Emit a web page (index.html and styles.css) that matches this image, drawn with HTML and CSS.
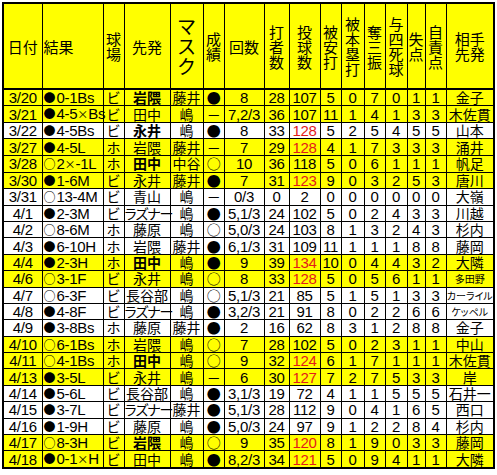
FILE: index.html
```html
<!DOCTYPE html>
<html lang="ja">
<head>
<meta charset="utf-8">
<title>先発成績</title>
<link rel="stylesheet" href="styles.css">
</head>
<body>
<table class="score">
<colgroup>
<col class="w39"><col class="w61"><col class="w21"><col class="w46"><col class="w33"><col class="w21"><col class="w40"><col class="w25"><col class="w31"><col class="w21"><col class="w23"><col class="w21"><col class="w22"><col class="w18"><col class="w21"><col class="w48">
</colgroup>
<thead>
<tr>
<th>日付</th><th class="l">結果</th><th>球<br>場</th><th>先発</th><th class="mask">マ<br>ス<br>ク</th><th>成<br>績</th><th>回数</th><th>打<br>者<br>数</th><th>投<br>球<br>数</th><th>被<br>安<br>打</th><th>被<br>本<br>塁<br>打</th><th>奪<br>三<br>振</th><th>与<br>四<br>死<br>球</th><th>失<br>点</th><th>自<br>責<br>点</th><th>相手<br>先発</th>
</tr>
</thead>
<tbody>
<tr class="y"><td>3/20</td><td class="l"><span class="mk">●</span>0-1Bs</td><td class="j">ビ</td><td class="j b">岩隈</td><td class="j">藤井</td><td class="mk">●</td><td>8</td><td>28</td><td>107</td><td>5</td><td>0</td><td>7</td><td>0</td><td>1</td><td>1</td><td class="j">金子</td></tr>
<tr class="y"><td>3/21</td><td class="l"><span class="mk">●</span>4-5<span class="mk x">×</span>Bs</td><td class="j">ビ</td><td class="j">田中</td><td class="j">嶋</td><td class="mk">－</td><td>7,2/3</td><td>36</td><td>107</td><td>11</td><td>1</td><td>4</td><td>1</td><td>3</td><td>3</td><td class="j">木佐貫</td></tr>
<tr><td>3/22</td><td class="l"><span class="mk">●</span>4-5Bs</td><td class="j">ビ</td><td class="j b">永井</td><td class="j">嶋</td><td class="mk">●</td><td>8</td><td>33</td><td class="r">128</td><td>5</td><td>2</td><td>5</td><td>4</td><td>5</td><td>5</td><td class="j">山本</td></tr>
<tr class="y"><td>3/27</td><td class="l"><span class="mk">●</span>4-5L</td><td class="j">ホ</td><td class="j">岩隈</td><td class="j">藤井</td><td class="mk">－</td><td>7</td><td>29</td><td class="r">128</td><td>4</td><td>1</td><td>7</td><td>3</td><td>3</td><td>3</td><td class="j">涌井</td></tr>
<tr class="y"><td>3/28</td><td class="l"><span class="mk">○</span>2<span class="mk x">×</span>-1L</td><td class="j">ホ</td><td class="j b">田中</td><td class="j">中谷</td><td class="mk">○</td><td>10</td><td>36</td><td>118</td><td>5</td><td>0</td><td>6</td><td>1</td><td>1</td><td>1</td><td class="j">帆足</td></tr>
<tr class="y"><td>3/30</td><td class="l"><span class="mk">●</span>1-6M</td><td class="j">ビ</td><td class="j">永井</td><td class="j">藤井</td><td class="mk">●</td><td>7</td><td>31</td><td class="r">123</td><td>9</td><td>0</td><td>3</td><td>2</td><td>5</td><td>3</td><td class="j">唐川</td></tr>
<tr><td>3/31</td><td class="l"><span class="mk">○</span>13-4M</td><td class="j">ビ</td><td class="j">青山</td><td class="j">嶋</td><td class="mk">－</td><td>0/3</td><td>0</td><td>2</td><td>0</td><td>0</td><td>0</td><td>0</td><td>0</td><td>0</td><td class="j">大嶺</td></tr>
<tr><td>4/1</td><td class="l"><span class="mk">●</span>2-3M</td><td class="j">ビ</td><td class="j kana">ラズナー</td><td class="j">嶋</td><td class="mk">●</td><td>5,1/3</td><td>24</td><td>102</td><td>5</td><td>0</td><td>2</td><td>4</td><td>3</td><td>3</td><td class="j">川越</td></tr>
<tr><td>4/2</td><td class="l"><span class="mk">○</span>8-6M</td><td class="j">ホ</td><td class="j">藤原</td><td class="j">嶋</td><td class="mk">○</td><td>5,0/3</td><td>24</td><td>103</td><td>8</td><td>1</td><td>3</td><td>2</td><td>4</td><td>3</td><td class="j">杉内</td></tr>
<tr><td>4/3</td><td class="l"><span class="mk">●</span>6-10H</td><td class="j">ホ</td><td class="j">岩隈</td><td class="j">藤井</td><td class="mk">●</td><td>6,1/3</td><td>31</td><td>109</td><td>11</td><td>1</td><td>1</td><td>1</td><td>8</td><td>8</td><td class="j">藤岡</td></tr>
<tr class="y"><td>4/4</td><td class="l"><span class="mk">●</span>2-3H</td><td class="j">ホ</td><td class="j b">田中</td><td class="j">嶋</td><td class="mk">●</td><td>9</td><td>39</td><td class="r">134</td><td>10</td><td>0</td><td>4</td><td>4</td><td>3</td><td>2</td><td class="j">大隣</td></tr>
<tr class="y"><td>4/6</td><td class="l"><span class="mk">○</span>3-1F</td><td class="j">ビ</td><td class="j">永井</td><td class="j">嶋</td><td class="mk">○</td><td>8</td><td>33</td><td class="r">128</td><td>5</td><td>0</td><td>5</td><td>6</td><td>1</td><td>1</td><td class="j sm">多田野</td></tr>
<tr><td>4/7</td><td class="l"><span class="mk">○</span>6-3F</td><td class="j">ビ</td><td class="j">長谷部</td><td class="j">嶋</td><td class="mk">○</td><td>5,1/3</td><td>21</td><td>85</td><td>5</td><td>1</td><td>5</td><td>1</td><td>3</td><td>3</td><td class="j sm">カーライル</td></tr>
<tr><td>4/8</td><td class="l"><span class="mk">●</span>4-8F</td><td class="j">ビ</td><td class="j kana">ラズナー</td><td class="j">嶋</td><td class="mk">●</td><td>3,2/3</td><td>21</td><td>91</td><td>8</td><td>0</td><td>2</td><td>2</td><td>6</td><td>6</td><td class="j sm">ケッペル</td></tr>
<tr><td>4/9</td><td class="l"><span class="mk">●</span>3-8Bs</td><td class="j">ホ</td><td class="j">藤原</td><td class="j">藤井</td><td class="mk">●</td><td>2</td><td>16</td><td>62</td><td>8</td><td>3</td><td>1</td><td>2</td><td>8</td><td>8</td><td class="j">金子</td></tr>
<tr class="y"><td>4/10</td><td class="l"><span class="mk">○</span>6-1Bs</td><td class="j">ホ</td><td class="j">岩隈</td><td class="j">嶋</td><td class="mk">○</td><td>7</td><td>28</td><td>102</td><td>5</td><td>0</td><td>2</td><td>3</td><td>1</td><td>1</td><td class="j">中山</td></tr>
<tr class="y"><td>4/11</td><td class="l"><span class="mk">○</span>4-1Bs</td><td class="j">ホ</td><td class="j b">田中</td><td class="j">嶋</td><td class="mk">○</td><td>9</td><td>32</td><td class="r">124</td><td>6</td><td>1</td><td>7</td><td>1</td><td>1</td><td>1</td><td class="j">木佐貫</td></tr>
<tr class="y"><td>4/13</td><td class="l"><span class="mk">●</span>3-5L</td><td class="j">ビ</td><td class="j">永井</td><td class="j">嶋</td><td class="mk">－</td><td>6</td><td>30</td><td class="r">127</td><td>7</td><td>2</td><td>7</td><td>5</td><td>3</td><td>3</td><td class="j">岸</td></tr>
<tr><td>4/14</td><td class="l"><span class="mk">●</span>5-6L</td><td class="j">ビ</td><td class="j">長谷部</td><td class="j">嶋</td><td class="mk">●</td><td>3,1/3</td><td>19</td><td>72</td><td>4</td><td>1</td><td>1</td><td>5</td><td>5</td><td>5</td><td class="j">石井一</td></tr>
<tr><td>4/15</td><td class="l"><span class="mk">●</span>3-7L</td><td class="j">ビ</td><td class="j kana">ラズナー</td><td class="j">藤井</td><td class="mk">●</td><td>5,1/3</td><td>28</td><td>112</td><td>9</td><td>0</td><td>4</td><td>1</td><td>6</td><td>5</td><td class="j">西口</td></tr>
<tr><td>4/16</td><td class="l"><span class="mk">●</span>1-9H</td><td class="j">ビ</td><td class="j">藤原</td><td class="j">嶋</td><td class="mk">●</td><td>5,0/3</td><td>24</td><td>97</td><td>9</td><td>1</td><td>2</td><td>2</td><td>8</td><td>4</td><td class="j">杉内</td></tr>
<tr class="y"><td>4/17</td><td class="l"><span class="mk">○</span>8-3H</td><td class="j">ビ</td><td class="j b">岩隈</td><td class="j">嶋</td><td class="mk">○</td><td>9</td><td>35</td><td class="r">120</td><td>8</td><td>1</td><td>9</td><td>0</td><td>3</td><td>3</td><td class="j">藤岡</td></tr>
<tr class="y"><td>4/18</td><td class="l"><span class="mk">●</span>0-1<span class="mk x">×</span>H</td><td class="j">ビ</td><td class="j">田中</td><td class="j">嶋</td><td class="mk">●</td><td>8,2/3</td><td>34</td><td class="r">121</td><td>5</td><td>0</td><td>9</td><td>4</td><td>1</td><td>1</td><td class="j">大隣</td></tr>
</tbody>
</table>
</body>
</html>
```

FILE: styles.css
```css
body {
  margin: 0;
  background: #fff;
  font-family: "Liberation Sans", "Noto Sans CJK JP", sans-serif;
  color: #000;
}

.score {
  margin: 2px 0 0 2px;
  border-collapse: collapse;
  table-layout: fixed;
  width: 493px;
  border: 2px solid #000;
  font-size: 15px;
}

.w39 { width: 39px; }
.w61 { width: 61px; }
.w21 { width: 21px; }
.w46 { width: 46px; }
.w33 { width: 33px; }
.w40 { width: 40px; }
.w25 { width: 25px; }
.w31 { width: 31px; }
.w23 { width: 23px; }
.w22 { width: 22px; }
.w18 { width: 18px; }
.w48 { width: 48px; }

.score th,
.score td {
  border: 1px solid #000;
  padding: 0;
  text-align: center;
  white-space: nowrap;
}

.score thead th {
  background: #ff0;
  font-weight: normal;
  height: 84px;
  line-height: 15px;
  font-size: 15px;
  border-bottom: 2px solid #000;
  font-family: "Noto Sans CJK JP", sans-serif;
  vertical-align: middle;
}

.score thead th.mask {
  font-size: 19px;
  line-height: 20px;
}

.score th.l,
.score td.l {
  text-align: left;
  padding-left: 1px;
}

.score tbody tr {
  height: 16.4px;
}

.score td {
  line-height: 15px;
  height: 15px;
  letter-spacing: -0.3px;
}

.score tr.y td {
  background: #ff0;
}

.score td.j,
.mk {
  font-family: "Noto Sans CJK JP", sans-serif;
  font-size: 14px;
  letter-spacing: 0;
}

.score td.l .mk {
  font-size: 12px;
  margin-right: 1px;
}

.score td.l .x {
  font-size: 11px;
  margin-right: 0;
}

.score td.b {
  font-weight: bold;
}

.score td.kana {
  font-feature-settings: "palt";
  letter-spacing: -1px;
}

.score td.sm {
  font-size: 10px;
  font-feature-settings: "palt";
}

.score td.r {
  color: #e31b1b;
}
```
